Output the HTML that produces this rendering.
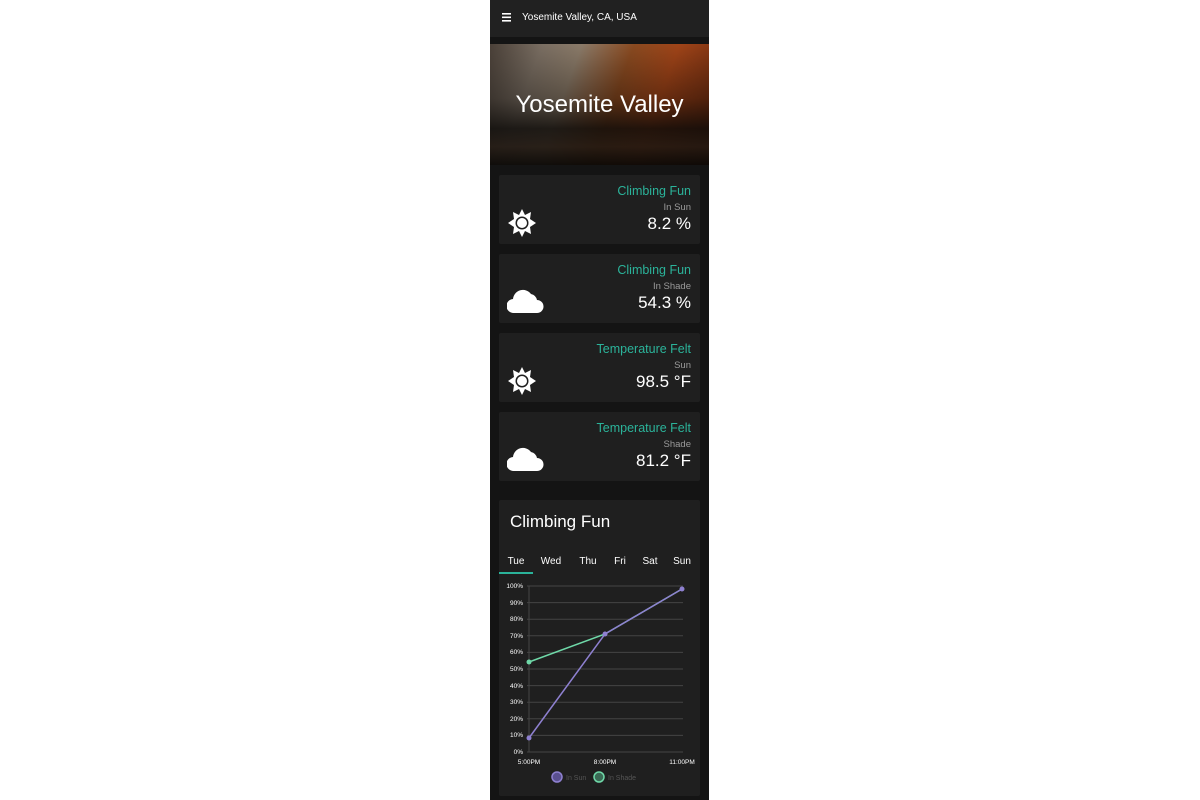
<!DOCTYPE html>
<html><head><style>
*{margin:0;padding:0;box-sizing:border-box}
body{width:1200px;height:800px;background:#fff;font-family:"Liberation Sans",sans-serif;position:relative;overflow:hidden}
#col{position:absolute;left:490px;top:0;width:219px;height:800px;background:#141414}
#bar{position:absolute;left:0;top:0;width:219px;height:37px;background:#212121;color:#fff;font-size:10px}
#hero{position:absolute;left:0;top:44px;width:219px;height:121px;background:
linear-gradient(180deg,rgba(0,0,0,0) 0%,rgba(0,0,0,.35) 45%,rgba(12,10,8,.85) 70%,rgba(30,22,16,.9) 85%,rgba(10,8,6,.95) 100%),
linear-gradient(110deg,#4a4038 0%,#7a6e62 20%,#8a7a68 35%,#8a4a20 55%,#a04418 72%,#6a2a10 100%);}
.card{position:absolute;left:9px;width:201px;height:69px;background:#1f1f1f;border-radius:2px;text-align:right;padding-right:9px}
.t{color:#2bb39a;font-size:12.5px;margin-top:9px}
.s{color:#9a9a9a;font-size:9.5px;margin-top:4px}
.v{color:#fff;font-size:17px;margin-top:1px}
.ic{position:absolute;left:8px;top:33px}
#chart{position:absolute;left:9px;top:500px;width:201px;height:296px;background:#1f1f1f;border-radius:2px}
</style></head><body>
<div id="col">
<div id="bar"><svg style="position:absolute;left:12px;top:13px" width="9" height="9"><rect y="0" width="9" height="1.6" fill="#fff"/><rect y="3.5" width="9" height="1.6" fill="#fff"/><rect y="7" width="9" height="1.6" fill="#fff"/></svg><span style="position:absolute;left:32px;top:12px">Yosemite Valley, CA, USA</span></div>
<div id="hero"><div style="position:absolute;width:100%;top:47px;text-align:center;color:#fff;font-size:24px">Yosemite Valley</div></div>
<div class="card" style="top:175px"><div class="t">Climbing Fun</div><div class="s">In Sun</div><div class="v">8.2 %</div>
<svg class="ic" width="30" height="30" viewBox="0 0 30 30"><polygon fill="#fff" points="15,1 18,7 24,4 23,11 29,15 23,19 24,26 18,23 15,29 12,23 6,26 7,19 1,15 7,11 6,4 12,7"/><circle cx="15" cy="15" r="6.5" fill="#1f1f1f"/><circle cx="15" cy="15" r="5" fill="#fff"/></svg></div>
<div class="card" style="top:254px"><div class="t">Climbing Fun</div><div class="s">In Shade</div><div class="v">54.3 %</div>
<svg class="ic" width="38" height="30" viewBox="0 0 38 30" style="top:30px"><path fill="#fff" d="M7 29 A7 7 0 0 1 6 15 A10 10 0 0 1 24 10 A8 8 0 0 1 30 16 A6.5 6.5 0 0 1 30 29 Z"/></svg></div>
<div class="card" style="top:333px"><div class="t">Temperature Felt</div><div class="s">Sun</div><div class="v">98.5 °F</div>
<svg class="ic" width="30" height="30" viewBox="0 0 30 30"><polygon fill="#fff" points="15,1 18,7 24,4 23,11 29,15 23,19 24,26 18,23 15,29 12,23 6,26 7,19 1,15 7,11 6,4 12,7"/><circle cx="15" cy="15" r="6.5" fill="#1f1f1f"/><circle cx="15" cy="15" r="5" fill="#fff"/></svg></div>
<div class="card" style="top:412px"><div class="t">Temperature Felt</div><div class="s">Shade</div><div class="v">81.2 °F</div>
<svg class="ic" width="38" height="30" viewBox="0 0 38 30" style="top:30px"><path fill="#fff" d="M7 29 A7 7 0 0 1 6 15 A10 10 0 0 1 24 10 A8 8 0 0 1 30 16 A6.5 6.5 0 0 1 30 29 Z"/></svg></div>
<div id="chart"><div style="position:absolute;left:11px;top:12px;color:#fff;font-size:17px">Climbing Fun</div></div>
<svg style="position:absolute;left:0;top:0" width="219" height="800" font-family="Liberation Sans" >
<g fill="#fff" font-size="10" text-anchor="middle"><text x="26" y="564">Tue</text><text x="61" y="564">Wed</text><text x="98" y="564">Thu</text><text x="130" y="564">Fri</text><text x="160" y="564">Sat</text><text x="192" y="564">Sun</text></g>
<rect x="9" y="572" width="34" height="2" fill="#2bb39a"/>
<g stroke="#444" stroke-width="1">
<line x1="37" y1="586" x2="193" y2="586"/><line x1="37" y1="602.6" x2="193" y2="602.6"/><line x1="37" y1="619.2" x2="193" y2="619.2"/><line x1="37" y1="635.8" x2="193" y2="635.8"/><line x1="37" y1="652.4" x2="193" y2="652.4"/><line x1="37" y1="669" x2="193" y2="669"/><line x1="37" y1="685.6" x2="193" y2="685.6"/><line x1="37" y1="702.2" x2="193" y2="702.2"/><line x1="37" y1="718.8" x2="193" y2="718.8"/><line x1="37" y1="735.4" x2="193" y2="735.4"/><line x1="37" y1="752" x2="193" y2="752"/><line x1="39" y1="586" x2="39" y2="752"/></g>
<g fill="#fff" font-size="6.5" text-anchor="end"><text x="33" y="588">100%</text><text x="33" y="605">90%</text><text x="33" y="621">80%</text><text x="33" y="638">70%</text><text x="33" y="654">60%</text><text x="33" y="671">50%</text><text x="33" y="688">40%</text><text x="33" y="704">30%</text><text x="33" y="721">20%</text><text x="33" y="737">10%</text><text x="33" y="754">0%</text></g>
<g fill="#fff" font-size="6.5" text-anchor="middle"><text x="39" y="764">5:00PM</text><text x="115" y="764">8:00PM</text><text x="192" y="764">11:00PM</text></g>
<polyline points="39,662 115,634 192,589" fill="none" stroke="#6fd8a8" stroke-width="1.5"/>
<polyline points="39,738 115,634 192,589" fill="none" stroke="#8e80d0" stroke-width="1.5"/>
<g fill="#6fd8a8"><circle cx="39" cy="662" r="2.5"/></g>
<g fill="#8e80d0"><circle cx="39" cy="738" r="2.5"/><circle cx="115" cy="634" r="2.5"/><circle cx="192" cy="589" r="2.5"/></g>
<circle cx="67" cy="777" r="5" fill="#5a5090" stroke="#8e80d0" stroke-width="1.5"/>
<circle cx="109" cy="777" r="5" fill="#3a6a55" stroke="#6fd8a8" stroke-width="1.5"/>
<g fill="#555" font-size="7"><text x="76" y="780">In Sun</text><text x="118" y="780">In Shade</text></g>
</svg>
</div>
</body></html>
